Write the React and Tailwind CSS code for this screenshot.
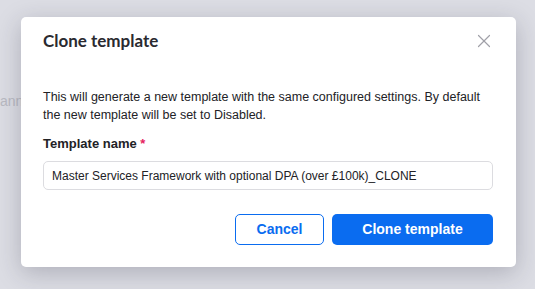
import { X } from 'lucide-react';

const App = () => {
  return (
    <div className="relative h-[289px] w-[535px] overflow-hidden bg-[#dcdde4] font-['Liberation_Sans',Arial,sans-serif]">
      {/* page behind the overlay */}
      <div className="pt-[91px] text-[14px] text-[#b9bac2]">ann</div>

      {/* Dialog */}
      <div className="absolute left-[21px] top-[17px] w-[495px] h-[250px] rounded-[5px] bg-white shadow-[0_6px_24px_rgba(40,40,60,0.25)] px-[22px]">
        <div className="flex items-center justify-between h-[48px]">
          <h2 className="font-['Lato',sans-serif] text-[17px] font-bold text-[#2a2a30]">Clone template</h2>
          <button type="button" className="text-[#a0a0a8] -mr-[1px]">
            <X className="w-[22px] h-[22px]" strokeWidth={1.3} />
          </button>
        </div>

        <p className="mt-[23px] text-[12.5px] leading-[18px] text-[#222226]">
          This will generate a new template with the same configured settings. By default the new
          template will be set to Disabled.
        </p>

        <label className="block mt-[11px] text-[13px] font-bold text-[#222226] leading-[18px]">
          Template name <span className="text-[#e5245e]">*</span>
        </label>

        <input
          type="text"
          readOnly
          value="Master Services Framework with optional DPA (over £100k)_CLONE"
          className="mt-[8px] w-[450px] h-[29px] rounded-[5px] border border-[#dcdce0] px-[8px] text-[12px] text-[#222226] outline-none"
        />

        <div className="flex justify-end gap-[8px] mt-[24px] pr-[1px]">
          <button
            type="button"
            className="w-[89px] h-[31px] rounded-[5px] border border-[#0a6cf0] text-[#0a6cf0] text-[14px] font-bold"
          >
            Cancel
          </button>
          <button
            type="button"
            className="w-[161px] h-[31px] rounded-[5px] bg-[#0a6cf0] text-white text-[14px] font-bold"
          >
            Clone template
          </button>
        </div>
      </div>
    </div>
  );
};

export default App;
